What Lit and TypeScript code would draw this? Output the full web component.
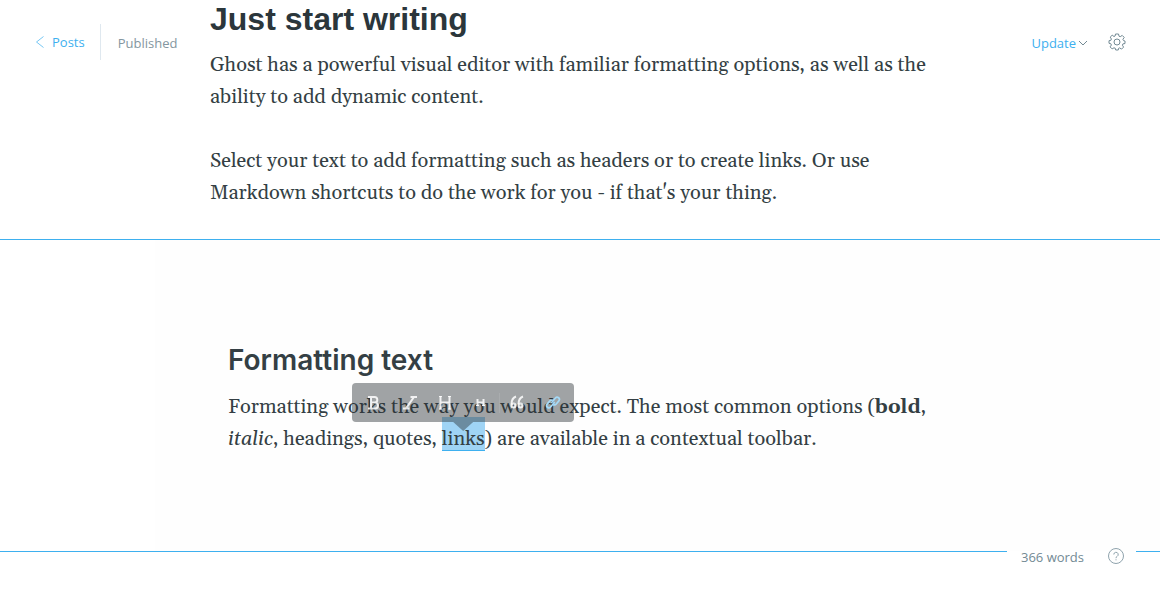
import { LitElement, html, css, svg } from "lit";
import { customElement, property } from "lit/decorators.js";

@customElement("format-toolbar")
class FormatToolbar extends LitElement {
  static styles = css`
    :host {
      display: block;
    }
    .bar {
      display: flex;
      align-items: center;
      box-sizing: border-box;
      height: 39px;
      padding: 0 3px;
      border-radius: 4px;
      background: rgba(41, 48, 52, 0.44);
    }
    button {
      display: flex;
      align-items: center;
      justify-content: center;
      width: 36px;
      height: 39px;
      margin: 0;
      padding: 0;
      border: 0;
      background: none;
      color: rgba(255, 255, 255, 0.85);
    }
    .active {
      color: #a5daf8;
    }
    svg {
      display: block;
      fill: none;
      stroke: currentColor;
      stroke-width: 2;
    }
    .divider {
      width: 1px;
      height: 20px;
      margin-right: -1px;
      background: rgba(255, 255, 255, 0.1);
    }
    .arrow {
      width: 20px;
      height: 9px;
      margin: 0 auto;
      background: rgba(41, 48, 52, 0.44);
      clip-path: polygon(0 0, 100% 0, 50% 100%);
    }
  `;

  private icon(shape: unknown) {
    return html`<svg width="16" height="16" viewBox="0 0 16 16" aria-hidden="true">${shape}</svg>`;
  }

  render() {
    return html`
      <div class="bar" role="toolbar" aria-label="Formatting">
        <button aria-label="Bold">
          ${this.icon(svg`<path d="M3 2h6.500a2.800 2.800 0 0 1 0 5.600H6M9.500 7.600h.6a2.900 2.900 0 0 1 0 5.800H3M6 2v11.400"/>`)}
        </button>
        <button aria-label="Italic">
          ${this.icon(svg`<path d="M9.500 2H16M2 13.400h6.500M13 2L5 13.400"/>`)}
        </button>
        <button aria-label="Heading">
          ${this.icon(svg`<path d="M3.500 1v13.500M12.500 1v13.500M3.500 7.500h9"/><path d="M2 1.500h3M11 1.500h3M2 14h3M11 14h3" stroke-width="1"/>`)}
        </button>
        <button aria-label="Subheading">
          ${this.icon(svg`<path d="M4.500 4v7M10.500 4v7M4.500 7.500h6"/><path d="M3 10.500h3M9 10.500h3" stroke-width="1"/>`)}
        </button>
        <span class="divider"></span>
        <button aria-label="Quote">
          ${this.icon(svg`<path d="M7 1.500C4 2.500 2.500 5 2.500 9.500M14 1.500c-3 1-4.500 3.500-4.500 8"/><circle cx="4.500" cy="10.500" r="2"/><circle cx="11.500" cy="10.500" r="2"/>`)}
        </button>
        <button class="active" aria-label="Link">
          ${this.icon(svg`<g transform="rotate(-50 8 7.500)" stroke-width="1.700"><path d="M9.500 8.500H3a2.200 2.200 0 0 1 0-4.400h4A2.500 2.500 0 0 1 9.500 6"/><path d="M6.500 6.500H13a2.200 2.200 0 0 1 0 4.400H9A2.500 2.500 0 0 1 6.500 9"/></g>`)}
        </button>
      </div>
      <div class="arrow"></div>
    `;
  }
}

@customElement("app-root")
class AppRoot extends LitElement {
  @property({ type: Number }) words = 366;

  static styles = css`
    :host {
      display: block;
      background: #fff;
      color: #343f44;
      font-family: Gelasio, Georgia, "Liberation Serif", serif;
      font-size: 20px;
      line-height: 32px;
    }
    h1,
    h2,
    p {
      margin: 0;
    }
    .editor {
      display: grid;
      grid-template-columns: 210px 1fr 210px;
      padding-bottom: 30px;
    }
    .nav {
      display: flex;
      align-items: center;
      height: 36px;
      margin-top: 24px;
      font: 13px/20px "Open Sans", "Noto Sans", sans-serif;
    }
    .start {
      padding-left: 35px;
    }
    .end {
      justify-content: flex-end;
      gap: 20px;
      padding-right: 34px;
    }
    .back {
      display: flex;
      align-items: center;
      gap: 7px;
      height: 36px;
      padding-right: 15px;
      border-right: 1px solid #dfe8ef;
      color: #3eb0ef;
      text-decoration: none;
    }
    .back svg {
      opacity: 0.7;
    }
    .status {
      padding: 2px 0 0 17px;
      color: #8496a0;
    }
    button {
      display: flex;
      align-items: center;
      gap: 2px;
      margin: 0;
      padding: 0;
      border: 0;
      background: none;
      color: #738a94;
      font: inherit;
    }
    .update {
      padding-top: 2px;
      color: #3eb0ef;
    }
    .update svg {
      color: #738a94;
    }
    svg {
      display: block;
      fill: none;
      stroke: currentColor;
    }
    h1 {
      padding-bottom: 11px;
      font: bold 32px/38px "Liberation Sans", sans-serif;
      color: #2b363b;
    }
    .copy p + p {
      margin-top: 32px;
    }
    .preview {
      border-top: 1px solid #3eb0ef;
      background: linear-gradient(90deg, #fff 155px, #fefefe 155px);
      padding: 100px 200px 96px 228px;
    }
    h2 {
      padding-bottom: 11px;
      font: 600 28px/40px Inter, sans-serif;
      font-optical-sizing: none;
    }
    .selected {
      position: relative;
      display: inline-block;
      height: 33px;
      margin-top: -6px;
      border-bottom: 1px solid #3eb0ef;
      background: #9fd4f5;
      color: inherit;
      text-decoration: none;
      vertical-align: top;
    }
    .selected span {
      display: block;
      padding-top: 6px;
    }
    format-toolbar {
      position: absolute;
      left: 50%;
      bottom: 19px;
      transform: translateX(-50%);
    }
    .footer {
      display: flex;
      align-items: flex-start;
      color: #738a94;
      font: 13px/20px "Open Sans", "Noto Sans", sans-serif;
    }
    .rule {
      height: 1px;
      background: #3eb0ef;
    }
    .grow {
      flex: 1;
    }
    .tail {
      width: 24px;
    }
    .count {
      display: flex;
      align-items: center;
      gap: 24px;
      margin-top: -6px;
      padding: 0 12px 0 14px;
    }
    .count span {
      padding-top: 2px;
    }
    .count button {
      color: #8fa3ad;
    }
  `;

  render() {
    return html`
      <main>
        <section class="editor">
          <nav class="nav start">
            <a class="back" href="#posts">
              <svg width="10" height="12" viewBox="0 0 10 12" stroke-width="1" aria-hidden="true"><path d="M8.500 .5L1.500 6l7 5.500" /></svg>
              Posts
            </a>
            <span class="status">Published</span>
          </nav>
          <article class="copy">
            <h1>Just start writing</h1>
            <p>
              Ghost has a powerful visual editor with familiar formatting options, as well as the<br />
              ability to add dynamic content.
            </p>
            <p>
              Select your text to add formatting such as headers or to create links. Or use<br />
              Markdown shortcuts to do the work for you - if that's your thing.
            </p>
          </article>
          <div class="nav end">
            <button class="update">
              Update
              <svg width="10" height="6" viewBox="0 0 10 6" aria-hidden="true"><path d="M1 1l4 4 4-4" /></svg>
            </button>
            <button aria-label="Settings">
              <svg width="18" height="18" viewBox="0 0 18 18" aria-hidden="true">
                <circle cx="9" cy="9" r="3" />
                <path d="M7.500 1h3l.5 2.200 1.200.5 2-1.300 2 2-1.300 2 .6 1.200L17 8v2.500l-2.100.4-.5 1.300 1.200 1.900-2 2-2-1.200-1.100.5L10.300 17H7.700l-.4-1.700-1.300-.5-1.900 1.100-2-2 1.300-1.900-.6-1.300L1 10.300V7.700l1.900-.4.5-1.300-1.200-1.900 2-1.900L6 3.500l1.100-.5z" />
              </svg>
            </button>
          </div>
        </section>
        <section class="preview">
          <h2>Formatting text</h2>
          <p>
            Formatting works the way you would expect. The most common options (<b>bold</b>,<br />
            <i>italic</i>, headings, quotes,
            <a class="selected" href="#links"><span>links</span><format-toolbar></format-toolbar></a>) are available in
            a contextual toolbar.
          </p>
        </section>
        <footer class="footer">
          <div class="rule grow"></div>
          <div class="count">
            <span>${this.words} words</span>
            <button aria-label="Help">
              <svg width="16" height="16" viewBox="0 0 16 16" aria-hidden="true">
                <circle cx="8" cy="8" r="7.500" />
                <path d="M5.800 6.500a2.200 2.200 0 1 1 3.300 1.900c-.8.500-1.100.8-1.100 1.800M8 11.300v1" />
              </svg>
            </button>
          </div>
          <div class="rule tail"></div>
        </footer>
      </main>
    `;
  }
}
